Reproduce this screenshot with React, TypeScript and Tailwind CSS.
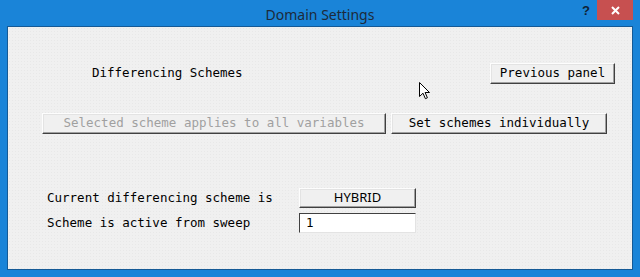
import React from 'react';

const mono = "font-['DejaVu_Sans_Mono','Liberation_Mono',monospace] text-[12.5px]";

function Btn({ children, disabled, className = '' }: { children: React.ReactNode; disabled?: boolean; className?: string }) {
  return (
    <div
      className={`flex items-center justify-center bg-[#f0f0f0] border border-t-[#fdfdfd] border-l-[#fdfdfd] border-r-[#404040] border-b-[#404040] shadow-[inset_-1px_-1px_0_#a0a0a0,inset_1px_1px_0_#e3e3e3] ${
        disabled ? 'text-[#a0a0a0]' : 'text-black'
      } ${className}`}
    >
      {children}
    </div>
  );
}

export default function App() {
  return (
    <div className="w-[640px] h-[277px] bg-[#1a84d8] flex flex-col relative overflow-hidden">
      {/* title bar */}
      <div className="h-[26px] flex items-start relative">
        <div className="flex-1 text-center pt-[4px] text-[14px] text-[#1d2a3a] font-['Segoe_UI','Noto_Sans',sans-serif]">
          Domain Settings
        </div>
        <div className="absolute right-[50px] top-[1px] text-[13px] font-bold text-[#0f1f33] font-['Liberation_Sans',sans-serif]">?</div>
        <div className="absolute right-[7px] top-0 w-[36px] h-[20px] bg-[#c75050] flex items-center justify-center">
          <svg width="9" height="9" viewBox="0 0 9 9">
            <path d="M1 1L8 8M8 1L1 8" stroke="white" strokeWidth="2" />
          </svg>
        </div>
      </div>

      {/* client area */}
      <div className="ml-[7px] mr-[7px] mb-[7px] flex-1 border border-[#155a96] bg-[#f0f0f0] bg-[radial-gradient(#e8e8e8_0.6px,transparent_0.7px)] bg-[length:3px_3px]">
        <div className={`${mono} flex flex-col`}>
          <div className="flex items-center h-[20px] mt-[36px]">
            <span className="ml-[84px]">Differencing Schemes</span>
            <Btn className="ml-auto mr-[17px] w-[125px] h-[21px]">Previous panel</Btn>
          </div>

          <div className="flex items-center mt-[30px]">
            <Btn disabled className="ml-[34px] w-[344px] h-[21px]">Selected scheme applies to all variables</Btn>
            <Btn className="ml-[5px] w-[216px] h-[21px]">Set schemes individually</Btn>
          </div>

          <div className="flex items-center mt-[54px]">
            <span className="ml-[39px] w-[252px]">Current differencing scheme is</span>
            <Btn className="w-[117px] h-[20px] text-[13px] font-['Segoe_UI','Noto_Sans',sans-serif]">HYBRID</Btn>
          </div>

          <div className="flex items-center mt-[5px]">
            <span className="ml-[39px] w-[252px]">Scheme is active from sweep</span>
            <div className="w-[117px] h-[20px] bg-white border border-t-[#404040] border-l-[#404040] border-r-[#e3e3e3] border-b-[#e3e3e3] pl-[6px] flex items-center">
              1
            </div>
          </div>
        </div>
      </div>

      {/* mouse pointer */}
      <svg className="absolute left-[419px] top-[82px]" width="12" height="18" viewBox="0 0 12 18">
        <path d="M0.5 0.5V14.5L4 11.2L6.4 16.7L8.4 15.8L6.1 10.5H10.5Z" fill="white" stroke="black" strokeWidth="1" strokeLinejoin="miter" />
      </svg>
    </div>
  );
}
